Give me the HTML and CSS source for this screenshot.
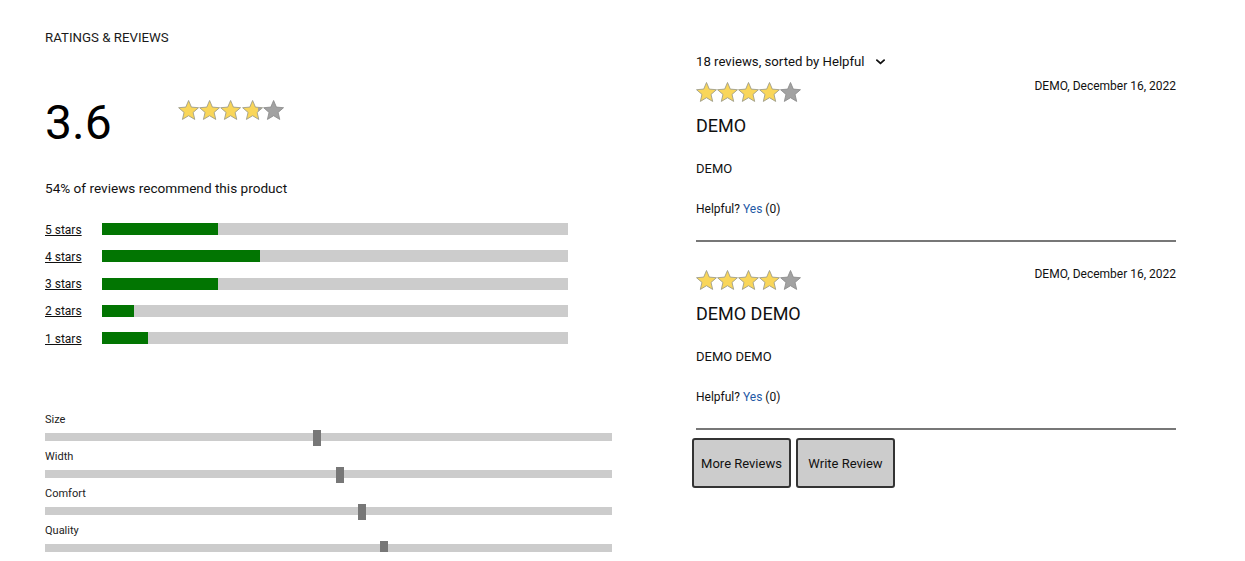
FILE: index.html
```html
<!DOCTYPE html>
<html lang="en">
<head>
<meta charset="utf-8">
<title>Ratings &amp; Reviews</title>
<link rel="stylesheet" href="styles.css">
</head>
<body>
<svg class="defs" width="0" height="0" aria-hidden="true">
  <defs>
    <symbol id="star" viewBox="1 1 22 21">
      <polygon points="12,1.5 14.94,8.45 22.46,9.1 16.76,14.05 18.47,21.4 12,17.5 5.53,21.4 7.24,14.05 1.54,9.1 9.06,8.45"/>
    </symbol>
    <linearGradient id="partial" x1="0" x2="1" y1="0" y2="0">
      <stop offset="0.78" stop-color="#f9d65a"/>
      <stop offset="0.78" stop-color="#a2a2a2"/>
    </linearGradient>
  </defs>
</svg>

<main class="page">
  <section class="summary">
    <h2 class="heading">RATINGS &amp; REVIEWS</h2>

    <div class="rating-row">
      <div class="rating-number">3.6</div>
      <div class="stars">
        <svg class="star full"><use href="#star"/></svg>
        <svg class="star full"><use href="#star"/></svg>
        <svg class="star full"><use href="#star"/></svg>
        <svg class="star part"><use href="#star"/></svg>
        <svg class="star empty"><use href="#star"/></svg>
      </div>
    </div>

    <p class="recommend">54% of reviews recommend this product</p>

    <div class="breakdown">
      <div class="bar-row"><a class="bar-label" href="#">5 stars</a><div class="bar"><div class="bar-fill" style="width:24.8%"></div></div></div>
      <div class="bar-row"><a class="bar-label" href="#">4 stars</a><div class="bar"><div class="bar-fill" style="width:33.8%"></div></div></div>
      <div class="bar-row"><a class="bar-label" href="#">3 stars</a><div class="bar"><div class="bar-fill" style="width:24.8%"></div></div></div>
      <div class="bar-row"><a class="bar-label" href="#">2 stars</a><div class="bar"><div class="bar-fill" style="width:6.8%"></div></div></div>
      <div class="bar-row"><a class="bar-label" href="#">1 stars</a><div class="bar"><div class="bar-fill" style="width:9.8%"></div></div></div>
    </div>

    <div class="factors">
      <div class="factor">
        <div class="factor-label">Size</div>
        <div class="track"><div class="thumb" style="left:47.3%"></div></div>
      </div>
      <div class="factor">
        <div class="factor-label">Width</div>
        <div class="track"><div class="thumb" style="left:51.3%"></div></div>
      </div>
      <div class="factor">
        <div class="factor-label">Comfort</div>
        <div class="track"><div class="thumb" style="left:55.2%"></div></div>
      </div>
      <div class="factor">
        <div class="factor-label">Quality</div>
        <div class="track"><div class="thumb" style="left:59.1%"></div></div>
      </div>
    </div>
  </section>

  <section class="reviews">
    <div class="sort">
      <span>18 reviews, sorted by Helpful</span>
      <svg class="chevron" viewBox="0 0 10 6"><polyline points="1,1 5,4.6 9,1"/></svg>
    </div>

    <article class="review">
      <div class="review-head">
        <div class="stars small">
          <svg class="star full"><use href="#star"/></svg>
          <svg class="star full"><use href="#star"/></svg>
          <svg class="star full"><use href="#star"/></svg>
          <svg class="star full"><use href="#star"/></svg>
          <svg class="star empty"><use href="#star"/></svg>
        </div>
        <div class="review-date">DEMO, December 16, 2022</div>
      </div>
      <h3 class="review-title">DEMO</h3>
      <p class="review-body">DEMO</p>
      <p class="helpful">Helpful? <a href="#">Yes</a> (0)</p>
    </article>

    <article class="review">
      <div class="review-head">
        <div class="stars small">
          <svg class="star full"><use href="#star"/></svg>
          <svg class="star full"><use href="#star"/></svg>
          <svg class="star full"><use href="#star"/></svg>
          <svg class="star full"><use href="#star"/></svg>
          <svg class="star empty"><use href="#star"/></svg>
        </div>
        <div class="review-date">DEMO, December 16, 2022</div>
      </div>
      <h3 class="review-title">DEMO DEMO</h3>
      <p class="review-body">DEMO DEMO</p>
      <p class="helpful">Helpful? <a href="#">Yes</a> (0)</p>
    </article>

    <div class="actions">
      <button class="btn" type="button">More Reviews</button>
      <button class="btn" type="button">Write Review</button>
    </div>
  </section>
</main>
</body>
</html>
```

FILE: styles.css
```css
* {
  box-sizing: border-box;
}

html, body {
  margin: 0;
  padding: 0;
  background: #ffffff;
}

body {
  font-family: Roboto, "Liberation Sans", Arial, sans-serif;
  color: #111111;
}

.defs {
  position: absolute;
  width: 0;
  height: 0;
  overflow: hidden;
}

.page {
  display: flex;
  gap: 84px;
  padding: 30px 0 0 45px;
}

/* ---------- left summary ---------- */
.summary {
  width: 567px;
  flex: none;
  padding-top: 1px;
}

.heading {
  margin: 0;
  font-size: 13.28px;
  line-height: 14px;
  font-weight: 400;
  color: #1a1a1a;
}

.rating-row {
  display: flex;
  align-items: flex-start;
  margin-top: 50px;
  height: 56px;
}

.rating-number {
  width: 133px;
  font-size: 48px;
  line-height: 56px;
  color: #000000;
}

.stars {
  display: flex;
  margin-top: 5px;
}

.star {
  width: 21.2px;
  height: 20px;
  display: block;
  stroke-width: 0.9px;
}

.star.full {
  fill: #f9d65a;
  stroke: #9a9a8a;
}

.star.part {
  fill: url(#partial);
  stroke: #9a9a8a;
}

.star.empty {
  fill: #a2a2a2;
  stroke: #8c8c8c;
}

.recommend {
  margin: 29px 0 0;
  font-size: 13.6px;
  line-height: 16px;
}

.breakdown {
  display: flex;
  flex-direction: column;
  gap: 15.25px;
  margin-top: 27px;
}

.bar-row {
  display: flex;
  align-items: center;
  height: 12px;
}

.bar-label {
  width: 57px;
  flex: none;
  font-size: 12px;
  line-height: 14px;
  padding-top: 1px;
  color: #111111;
  text-decoration: underline;
}

.bar {
  width: 466px;
  height: 12px;
  background: #cccccc;
}

.bar-fill {
  height: 100%;
  background: #027502;
}

.factors {
  margin-top: 69px;
  display: flex;
  flex-direction: column;
  gap: 9px;
}

.factor-label {
  font-size: 11px;
  line-height: 13px;
  color: #222222;
}

.track {
  position: relative;
  margin-top: 7px;
  height: 8px;
  background: #cccccc;
}

.thumb {
  position: absolute;
  top: -3px;
  width: 8px;
  height: 16px;
  background: #777777;
}

/* ---------- right reviews ---------- */
.reviews {
  width: 480px;
  flex: none;
  margin-top: 24px;
}

.sort {
  display: flex;
  align-items: center;
  gap: 11px;
  font-size: 13.2px;
  line-height: 16px;
}

.chevron {
  width: 9px;
  height: 6px;
  fill: none;
  stroke: #111111;
  stroke-width: 2;
  stroke-linecap: round;
  stroke-linejoin: round;
}

.review {
  padding-top: 9px;
  border-bottom: 2px solid #777777;
  padding-bottom: 24px;
}

.review + .review {
  padding-top: 25px;
}

.review-head {
  display: flex;
  justify-content: space-between;
  align-items: flex-start;
}

.stars.small {
  margin-top: 3px;
}

.stars.small .star {
  width: 21px;
  height: 20px;
}

.review-date {
  font-size: 12px;
  line-height: 14px;
}

.review-title {
  margin: 13px 0 0;
  font-size: 18px;
  line-height: 22px;
  font-weight: 400;
}

.review-body {
  margin: 24px 0 0;
  font-size: 13px;
  line-height: 16px;
}

.helpful {
  margin: 25px 0 0;
  font-size: 12px;
  line-height: 14px;
}

.helpful a {
  color: #1f5aa6;
  text-decoration: none;
}

.actions {
  display: flex;
  gap: 5px;
  margin: 8px 0 0 -4px;
}

.btn {
  width: 99px;
  height: 50px;
  padding: 0;
  background: #cccccc;
  border: 2px solid #333333;
  border-radius: 3px;
  font-family: Roboto, "Liberation Sans", Arial, sans-serif;
  font-size: 13px;
  color: #111111;
}
```
